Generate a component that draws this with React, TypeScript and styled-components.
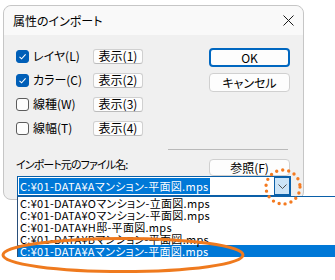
import styled, { createGlobalStyle } from 'styled-components';

const GlobalStyle = createGlobalStyle`
html, body {
    margin: 0;
    padding: 0;
    background: #fff;
    overflow: hidden;
}
body {
    font-family: "Noto Sans CJK JP", "Noto Sans", sans-serif;
    font-size: 12px;
    color: #000;
}
`;

const layers = [
    { label: 'レイヤ(L)', checked: true, n: 1 },
    { label: 'カラー(C)', checked: true, n: 2 },
    { label: '線種(W)', checked: false, n: 3 },
    { label: '線幅(T)', checked: false, n: 4 },
];

const files = [
    'C:¥01-DATA¥Oマンション-立面図.mps',
    'C:¥01-DATA¥Oマンション-平面図.mps',
    'C:¥01-DATA¥H邸-平面図.mps',
    'C:¥01-DATA¥Bマンション-平面図.mps',
    'C:¥01-DATA¥Aマンション-平面図.mps',
];

export default function App() {
    return (
        <Page>
            <GlobalStyle />
            <Dialog>
                <TitleBar>
                    <Title>属性のインポート</Title>
                    <svg width="11" height="11" viewBox="0 0 11 11">
                        <path d="M0.5 0.5 L10.5 10.5 M10.5 0.5 L0.5 10.5" stroke="#1a1a1a" strokeWidth="1" />
                    </svg>
                </TitleBar>

                <Body>
                    <TopSection>
                        <CheckList>
                            {layers.map(l => (
                                <CheckRow key={l.n}>
                                    <CheckBox $checked={l.checked}>
                                        {l.checked && (
                                            <svg width="9" height="9" viewBox="0 0 9 9">
                                                <path d="M1.5 4.8 L3.6 6.8 L7.6 2.4" fill="none" stroke="#fff" strokeWidth="1.1" />
                                            </svg>
                                        )}
                                    </CheckBox>
                                    <CheckLabel>{l.label}</CheckLabel>
                                    <ShowButton>表示({l.n})</ShowButton>
                                </CheckRow>
                            ))}
                        </CheckList>

                        <ActionColumn>
                            <ActionButton $focused>OK</ActionButton>
                            <ActionButton>キャンセル</ActionButton>
                        </ActionColumn>
                    </TopSection>

                    <Separator />

                    <FileRow>
                        <FileLabel>インポート元のファイル名:</FileLabel>
                        <BrowseButton>参照(F)</BrowseButton>
                    </FileRow>

                    <ComboWrap>
                        <Combo>
                            <ComboValue>{files[4]}</ComboValue>
                            <ComboArrow>
                                <svg width="9" height="5" viewBox="0 0 9 5">
                                    <path d="M0.5 0.5 L4.5 4.5 L8.5 0.5" fill="none" stroke="#505050" strokeWidth="1" />
                                </svg>
                            </ComboArrow>
                        </Combo>
                        <DropList>
                            {files.map((f, i) => (
                                <DropItem key={f} $selected={i === 4}>{f}</DropItem>
                            ))}
                        </DropList>
                    </ComboWrap>
                </Body>
            </Dialog>

            <Marks width="335" height="280" viewBox="0 0 335 280">
                <ellipse cx="123" cy="255" rx="120" ry="16.5" fill="none" stroke="#ef7a1e" strokeWidth="3" />
                <circle cx="283" cy="187" r="17" fill="none" stroke="#f47a20" strokeWidth="3.4"
                    strokeDasharray="0 6.1" strokeLinecap="round" />
            </Marks>
        </Page>
    );
}

const Page = styled.div`
position: relative;
width: 335px;
height: 280px;
padding: 5px 0 0 3px;
box-sizing: border-box;
overflow: hidden;
`;

const Dialog = styled.div`
width: 301px;
height: 195px;
box-sizing: border-box;
border: 1px solid #c6c6c6;
border-radius: 8px;
background: #f0f0f0;
display: flex;
flex-direction: column;
`;

const TitleBar = styled.div`
height: 29px;
flex: none;
background: #f9f9f9;
border-radius: 8px 8px 0 0;
display: flex;
align-items: center;
justify-content: space-between;
padding: 0 9px;
`;

const Title = styled.div`
font-size: 12px;
font-feature-settings: "palt";
line-height: 14px;
`;

const Body = styled.div`
padding: 9px 13px 0 12px;
display: flex;
flex-direction: column;
`;

const TopSection = styled.div`
display: flex;
justify-content: space-between;
align-items: flex-start;
`;

const CheckList = styled.div`
display: flex;
flex-direction: column;
`;

const CheckRow = styled.div`
height: 24px;
display: flex;
align-items: center;
`;

const CheckBox = styled.div<{ $checked: boolean }>`
width: 13px;
height: 13px;
box-sizing: border-box;
border-radius: 3px;
margin-right: 4px;
display: flex;
align-items: center;
justify-content: center;
background: ${p => (p.$checked ? '#005fb8' : '#fdfdfd')};
border: 1px solid ${p => (p.$checked ? '#005fb8' : '#5c5c5c')};
`;

const CheckLabel = styled.div`
width: 60px;
font-feature-settings: "palt";
line-height: 14px;
`;

const ShowButton = styled.div`
width: 50px;
height: 15px;
box-sizing: border-box;
border: 1px solid #d0d0d0;
border-bottom-color: #bcbcbc;
border-radius: 3px;
background: #fdfdfd;
display: flex;
align-items: center;
justify-content: center;
line-height: 12px;
`;

const ActionColumn = styled.div`
margin-top: 4px;
display: flex;
flex-direction: column;
gap: 6px;
`;

const ActionButton = styled.div<{ $focused?: boolean }>`
width: 81px;
height: 19px;
box-sizing: border-box;
border-radius: 4px;
background: #fdfdfd;
border: ${p => (p.$focused ? '2px solid #0067c0' : '1px solid #d0d0d0')};
display: flex;
align-items: center;
justify-content: center;
font-feature-settings: "palt";
font-weight: 400;
line-height: 14px;
`;

const Separator = styled.div`
margin: 9px 0 0 152px;
width: 120px;
height: 1px;
background: #b9b9b9;
`;

const FileRow = styled.div`
margin-top: 9px;
display: flex;
justify-content: space-between;
align-items: flex-start;
`;

const FileLabel = styled.div`
margin-top: -2px;
font-size: 11px;
font-feature-settings: "palt";
letter-spacing: -0.9px;
line-height: 14px;
`;

const BrowseButton = styled.div`
width: 81px;
height: 17px;
box-sizing: border-box;
border: 1px solid #d0d0d0;
border-radius: 4px;
background: #fdfdfd;
display: flex;
align-items: center;
justify-content: center;
line-height: 14px;
`;

const ComboWrap = styled.div`
position: relative;
margin: 0 -1px 0 1px;
font-size: 11px;
font-feature-settings: "palt";
letter-spacing: 0.3px;
`;

const Combo = styled.div`
height: 20px;
box-sizing: border-box;
border: 1px solid #0a5fa8;
background: #fff;
display: flex;
align-items: center;
justify-content: space-between;
padding: 0 0 0 1px;
`;

const ComboValue = styled.span`
background: #0078d7;
color: #fff;
line-height: 16px;
padding: 0 1px;
white-space: nowrap;
`;

const ComboArrow = styled.div`
width: 16px;
height: 18px;
box-sizing: border-box;
background: #cce4f7;
border: 1px solid #0a5fa8;
display: flex;
align-items: center;
justify-content: center;
`;

const DropList = styled.div`
position: absolute;
top: 100%;
left: 0;
width: 330px;
background: #fff;
border-top: 1px solid #0a5fa8;
border-left: 1px solid #2a4f7a;
z-index: 2;
`;

const DropItem = styled.div<{ $selected: boolean }>`
height: 12px;
line-height: 12px;
padding-left: 2px;
white-space: nowrap;
background: ${p => (p.$selected ? '#0078d7' : 'transparent')};
color: ${p => (p.$selected ? '#fff' : '#000')};
`;

const Marks = styled.svg`
position: absolute;
left: 0;
top: 0;
z-index: 3;
pointer-events: none;
`;
